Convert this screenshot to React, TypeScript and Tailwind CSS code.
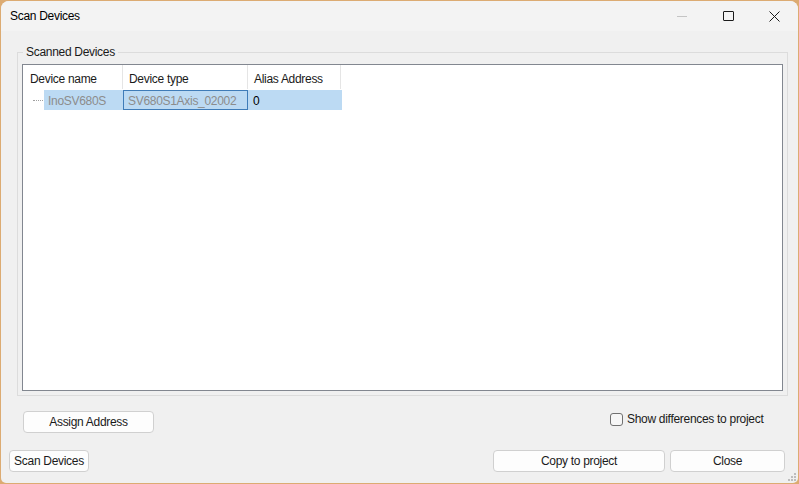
import React from "react";

const font = { fontFamily: '"Liberation Sans", Arial, sans-serif', letterSpacing: "-0.3px" };

function Btn({ w, children, className = "" }: { w: string; children: React.ReactNode; className?: string }) {
  return (
    <div
      className={`${w} h-[22px] flex items-center justify-center rounded-[4px] border border-[#d0d0d0] bg-[#fdfdfd] text-[12px] text-[#1a1a1a] ${className}`}
    >
      {children}
    </div>
  );
}

export default function App() {
  return (
    <div className="w-[799px] h-[484px] bg-[#dcab72] p-px" style={font}>
      <div className="w-full h-full bg-[#f0f0f0] rounded-t-[8px] rounded-b-[5px] overflow-hidden flex flex-col relative">
        {/* Title bar */}
        <div className="h-[30px] bg-[#f3f3f3] flex items-center pl-[9px] shrink-0">
          <span className="text-[12px] text-black">Scan Devices</span>
          <div className="ml-auto flex items-center h-full">
            <div className="w-[46px] h-full flex items-center justify-center">
              <div className="w-[10px] h-px bg-[#c4c4c4]" />
            </div>
            <div className="w-[46px] h-full flex items-center justify-center">
              <div className="w-[11px] h-[10px] border border-[#1a1a1a] rounded-[1px]" />
            </div>
            <div className="w-[46px] h-full flex items-center justify-center mr-[1px]">
              <svg width="11" height="11" viewBox="0 0 11 11">
                <path d="M0.5 0.5 L10.5 10.5 M10.5 0.5 L0.5 10.5" stroke="#1a1a1a" strokeWidth="1" />
              </svg>
            </div>
          </div>
        </div>

        {/* Group box */}
        <fieldset className="mt-[14px] ml-[16px] w-[771px] border border-[#dcdcdc] px-[4px] pb-[4px] pt-0">
          <legend className="ml-[1px] px-[3px] text-[12px] text-[#1a1a1a] leading-[14px]">Scanned Devices</legend>
          <div className="mt-[5px] h-[327px] border border-[#828790] bg-white">
            {/* Header */}
            <div className="flex h-[24px] text-[12px] text-[#1a1a1a]">
              <div className="w-[100px] border-r border-[#e5e5e5] flex items-center pt-[3px] pl-[7px]">Device name</div>
              <div className="w-[125px] border-r border-[#e5e5e5] flex items-center pt-[3px] pl-[6px]">Device type</div>
              <div className="w-[93px] border-r border-[#e5e5e5] flex items-center pt-[3px] pl-[6px]">Alias Address</div>
            </div>
            {/* Data row */}
            <div className="flex h-[20px] mt-px text-[12px]">
              <div className="w-[100px] flex items-center">
                <div className="w-[21px] flex items-center pl-[10px]">
                  <div className="w-[10px] border-t border-dotted border-[#a0a0a0]" />
                </div>
                <div className="flex-1 h-full bg-[#bcdaf3] flex items-center pt-px pl-[4px] text-[#8c8c8c]">InoSV680S</div>
              </div>
              <div className="w-[125px] h-full bg-[#bcdaf3] border border-[#3f7cb8] flex items-center pt-px pl-[4px] text-[#8c8c8c]">
                SV680S1Axis_02002
              </div>
              <div className="w-[94px] h-full bg-[#bcdaf3] flex items-center pt-px pl-[5px] text-black">0</div>
            </div>
          </div>
        </fieldset>

        {/* Assign row */}
        <div className="mt-[15px] flex items-start">
          <Btn w="w-[131px]" className="ml-[22px]">Assign Address</Btn>
          <div className="ml-[456px] mt-[1px] flex items-center h-[14px] gap-[4px]">
            <div className="w-[13px] h-[13px] border border-[#707070] rounded-[3px] bg-[#f6f6f6]" />
            <span className="text-[12px] text-[#1a1a1a]">Show differences to project</span>
          </div>
        </div>

        {/* Bottom row */}
        <div className="mt-[17px] flex items-start">
          <Btn w="w-[80px]" className="ml-[8px]">Scan Devices</Btn>
          <Btn w="w-[172px]" className="ml-[404px]">Copy to project</Btn>
          <Btn w="w-[115px]" className="ml-[5px]">Close</Btn>
        </div>

        {/* Resize grip */}
        <svg className="absolute right-[2px] bottom-[2px]" width="8" height="8" viewBox="0 0 8 8">
          <rect x="6" y="0" width="2" height="2" fill="#bdbdbd" />
          <rect x="3" y="3" width="2" height="2" fill="#bdbdbd" />
          <rect x="6" y="3" width="2" height="2" fill="#bdbdbd" />
          <rect x="0" y="6" width="2" height="2" fill="#bdbdbd" />
          <rect x="3" y="6" width="2" height="2" fill="#bdbdbd" />
          <rect x="6" y="6" width="2" height="2" fill="#bdbdbd" />
        </svg>
      </div>
    </div>
  );
}
